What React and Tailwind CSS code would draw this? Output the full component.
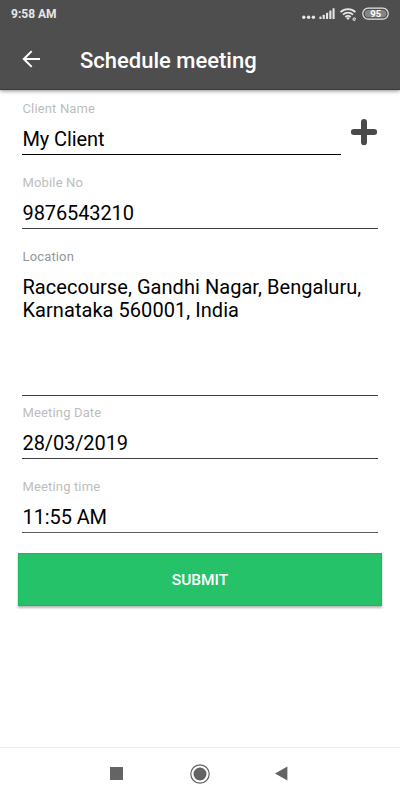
import React, { useState } from "react";
import { clsx } from "clsx";

const StatusIcons = () => (
  <div className="flex items-center">
    <svg width="88" height="16" viewBox="0 0 88 16" fill="#e6e6e6">
      <circle cx="2.8" cy="11.2" r="1.7" />
      <circle cx="7.6" cy="11.2" r="1.7" />
      <circle cx="12.4" cy="11.2" r="1.7" />
      <rect x="18.4" y="10.4" width="2.1" height="2.6" rx="0.5" />
      <rect x="21.7" y="8.8" width="2.1" height="4.2" rx="0.5" />
      <rect x="25" y="6.8" width="2.1" height="6.2" rx="0.5" />
      <rect x="28.3" y="4.6" width="2.1" height="8.4" rx="0.5" />
      <rect x="31.5" y="2.3" width="2.1" height="10.7" rx="0.5" />
      <g fill="none" stroke="#e6e6e6" strokeWidth="1.8">
        <path d="M39.6 6.1a10.6 10.6 0 0 1 14.8 0" />
        <path d="M42 8.7a7.2 7.2 0 0 1 10 0" />
        <path d="M44.3 11a3.9 3.9 0 0 1 5.4 0" />
      </g>
      <path d="M45.2 12a2.6 2.6 0 0 1 3.6 0l-1.8 1.9z" />
      <path
        d="M52 13.1h2.7a1.4 1.4 0 1 0-.5 1.2"
        fill="none"
        stroke="#e6e6e6"
        strokeWidth="0.9"
      />
      <rect
        x="61.8"
        y="2.2"
        width="25.4"
        height="11"
        rx="5.4"
        fill="none"
        stroke="#e6e6e6"
        strokeWidth="1.2"
      />
      <rect x="63.8" y="4.1" width="21.4" height="7.2" rx="3.6" fill="#858585" />
      <text
        x="74.8"
        y="11.2"
        textAnchor="middle"
        className="font-['Roboto',sans-serif] text-[9.5px] font-bold"
        fill="#fff"
      >
        95
      </text>
    </svg>
  </div>
);

const Header = () => (
  <header className="h-[90px] border-b border-[#3b3b3b] bg-[#4e4e4e] text-white shadow-[0_1px_4px_rgba(0,0,0,0.45)]">
    <div className="flex h-7 items-center justify-between pr-[11px] pl-[11px]">
      <span className="text-[12px] font-bold text-[#e6e6e6]">9:58 AM</span>
      <StatusIcons />
    </div>
    <div className="flex h-[62px] items-center pt-[2px] pl-[22px]">
      <button type="button" aria-label="Back">
        <svg width="19" height="18" viewBox="0 0 19 18" className="-mt-[3px]">
          <path
            d="M18 9H2M9.7 1.1L1.8 9l7.9 7.9"
            fill="none"
            stroke="#fff"
            strokeWidth="2"
          />
        </svg>
      </button>
      <h1 className="pl-[39px] text-[22px] font-medium">Schedule meeting</h1>
    </div>
  </header>
);

const Field = ({ label, value, onChange, multiline, className }) => (
  <label
    className={clsx(
      "flex flex-col border-b",
      multiline ? "h-[149px]" : "h-14",
      className
    )}
  >
    <span
      className={clsx(
        "h-5 pl-[0.5px] text-[13px] leading-5 tracking-[0.15px]",
        multiline ? "text-[#969696]" : "text-[#bdbdbd]"
      )}
    >
      {label}
    </span>
    {multiline ? (
      <textarea
        value={value}
        onChange={onChange}
        className="mt-[9px] h-[110px] w-full resize-none overflow-hidden pl-[0.5px] text-[20px] leading-[23px] tracking-[0.05px] text-black outline-none"
      />
    ) : (
      <input
        value={value}
        onChange={onChange}
        className="mt-2 h-6 w-full pl-[0.5px] text-[20px] leading-6 tracking-[-0.1px] text-black outline-none"
      />
    )}
  </label>
);

const NavBar = () => (
  <nav className="mt-auto flex h-[53px] items-center justify-between border-t border-[#eeeeee] pr-[112px] pb-px pl-[110px]">
    <span className="size-[13px] bg-[#646464]" />
    <svg width="20" height="20" viewBox="0 0 20 20" className="ml-[2px]">
      <circle cx="10" cy="10" r="9.2" fill="none" stroke="#646464" strokeWidth="1.2" />
      <circle cx="10" cy="10" r="6.5" fill="#646464" />
    </svg>
    <svg width="13" height="15" viewBox="0 0 13 15" fill="#646464">
      <path d="M0 7.5L12.4 .4v14.2z" />
    </svg>
  </nav>
);

export default function App() {
  const [form, setForm] = useState({
    client: "My Client",
    mobile: "9876543210",
    location: "Racecourse, Gandhi Nagar, Bengaluru,\nKarnataka 560001, India",
    date: "28/03/2019",
    time: "11:55 AM",
  });

  const update = (key) => (e) => setForm({ ...form, [key]: e.target.value });

  return (
    <div className="flex h-[800px] w-[400px] flex-col bg-white font-['Roboto',sans-serif]">
      <Header />
      <main className="flex flex-col px-[18px] pt-[9px]">
        <div className="flex flex-col px-1">
          <div className="flex">
            <Field
              label="Client Name"
              value={form.client}
              onChange={update("client")}
              className="w-[319px] border-black"
            />
            <button type="button" aria-label="Add client" className="ml-[9px] pt-[10px]">
              <svg width="28" height="28" viewBox="0 0 28 28">
                <path
                  d="M14 4v20.2M3.9 14h20.2"
                  fill="none"
                  stroke="#4a4a4a"
                  strokeWidth="6"
                  strokeLinecap="round"
                />
              </svg>
            </button>
          </div>
          <Field
            label="Mobile No"
            value={form.mobile}
            onChange={update("mobile")}
            className="mt-[18px] border-[#404040]"
          />
          <Field
            multiline
            label="Location"
            value={form.location}
            onChange={update("location")}
            className="mt-[18px] border-[#404040]"
          />
          <Field
            label="Meeting Date"
            value={form.date}
            onChange={update("date")}
            className="mt-[7px] border-[#404040]"
          />
          <Field
            label="Meeting time"
            value={form.time}
            onChange={update("time")}
            className="mt-[18px] border-[#606060]"
          />
        </div>
        <button
          type="button"
          className="mt-5 h-[53px] border border-[#14bb56] bg-[#26c26a] pt-[2px] text-[15.5px] font-medium text-white shadow-[0_2px_2px_rgba(0,0,0,0.28)]"
        >
          SUBMIT
        </button>
      </main>
      <NavBar />
    </div>
  );
}
